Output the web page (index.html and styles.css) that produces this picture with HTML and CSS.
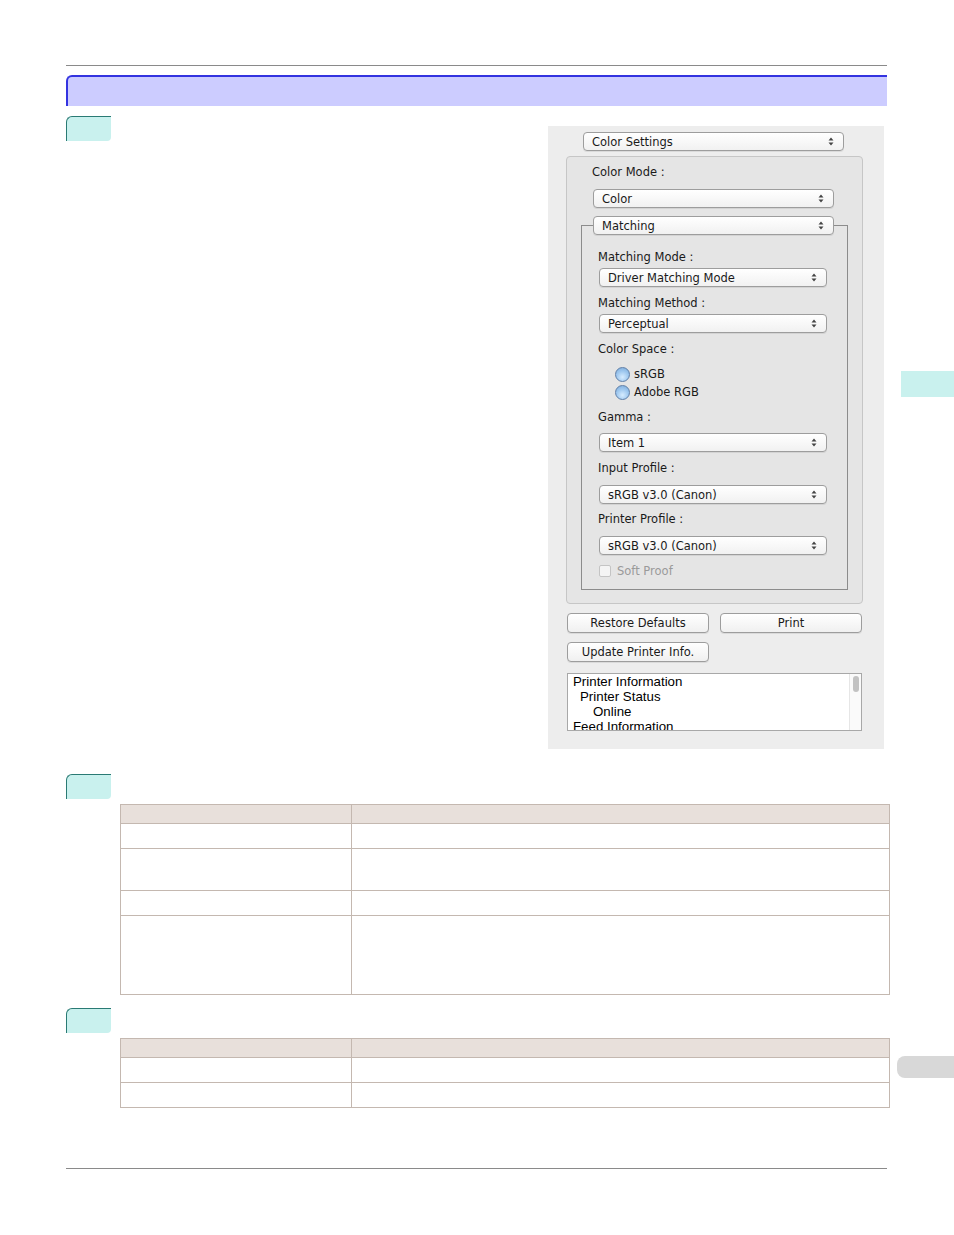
FILE: index.html
```html
<!DOCTYPE html>
<html>
<head>
    <title>Color Settings</title>
    <link rel="stylesheet" href="styles.css">
</head>
<body>
    <div class="page">
        <div class="rule rule-top"></div>
        <div class="title-bar"></div>

        <div class="section-one">
            <div class="step-tab"></div>
            <div class="dialog">
                <div class="popup popup-settings"><span>Color Settings</span><svg class="arrows" width="6" height="9" viewBox="0 0 6 9"><path d="M0.5 3.5 L3 0.5 L5.5 3.5Z M0.5 5.5 L3 8.5 L5.5 5.5Z"/></svg></div>

                <div class="group">
                    <div class="label label-mode">Color Mode :</div>
                    <div class="popup popup-mode"><span>Color</span><svg class="arrows" width="6" height="9" viewBox="0 0 6 9"><path d="M0.5 3.5 L3 0.5 L5.5 3.5Z M0.5 5.5 L3 8.5 L5.5 5.5Z"/></svg></div>

                    <div class="matching-box">
                        <div class="popup popup-matching"><span>Matching</span><svg class="arrows" width="6" height="9" viewBox="0 0 6 9"><path d="M0.5 3.5 L3 0.5 L5.5 3.5Z M0.5 5.5 L3 8.5 L5.5 5.5Z"/></svg></div>

                        <div class="label sub-label mt14">Matching Mode :</div>
                        <div class="popup popup-sub mt3"><span>Driver Matching Mode</span><svg class="arrows" width="6" height="9" viewBox="0 0 6 9"><path d="M0.5 3.5 L3 0.5 L5.5 3.5Z M0.5 5.5 L3 8.5 L5.5 5.5Z"/></svg></div>

                        <div class="label sub-label mt8">Matching Method :</div>
                        <div class="popup popup-sub mt3"><span>Perceptual</span><svg class="arrows" width="6" height="9" viewBox="0 0 6 9"><path d="M0.5 3.5 L3 0.5 L5.5 3.5Z M0.5 5.5 L3 8.5 L5.5 5.5Z"/></svg></div>

                        <div class="label sub-label mt8">Color Space :</div>
                        <div class="radio-row mt9"><span class="radio"></span>sRGB</div>
                        <div class="radio-row mt2"><span class="radio"></span>Adobe RGB</div>

                        <div class="label sub-label mt9">Gamma :</div>
                        <div class="popup popup-sub mt8"><span>Item 1</span><svg class="arrows" width="6" height="9" viewBox="0 0 6 9"><path d="M0.5 3.5 L3 0.5 L5.5 3.5Z M0.5 5.5 L3 8.5 L5.5 5.5Z"/></svg></div>

                        <div class="label sub-label mt8">Input Profile :</div>
                        <div class="popup popup-sub mt9"><span>sRGB v3.0 (Canon)</span><svg class="arrows" width="6" height="9" viewBox="0 0 6 9"><path d="M0.5 3.5 L3 0.5 L5.5 3.5Z M0.5 5.5 L3 8.5 L5.5 5.5Z"/></svg></div>

                        <div class="label sub-label mt7">Printer Profile :</div>
                        <div class="popup popup-sub mt9"><span>sRGB v3.0 (Canon)</span><svg class="arrows" width="6" height="9" viewBox="0 0 6 9"><path d="M0.5 3.5 L3 0.5 L5.5 3.5Z M0.5 5.5 L3 8.5 L5.5 5.5Z"/></svg></div>

                        <div class="check-row mt8"><span class="checkbox"></span>Soft Proof</div>
                    </div>
                </div>

                <div class="button-row">
                    <div class="button">Restore Defaults</div>
                    <div class="button">Print</div>
                </div>
                <div class="button-row">
                    <div class="button">Update Printer Info.</div>
                </div>

                <div class="info-list">
                    <div class="info-lines">
                        <div>Printer Information</div>
                        <div class="indent1">Printer Status</div>
                        <div class="indent2">Online</div>
                        <div>Feed Information</div>
                    </div>
                    <div class="scroll-track"><div class="scroll-thumb"></div></div>
                </div>
            </div>
        </div>

        <div class="step-tab tab-two"></div>
        <table class="info-table">
            <tr class="head"><td class="col1"></td><td></td></tr>
            <tr class="h25"><td></td><td></td></tr>
            <tr class="h42"><td></td><td></td></tr>
            <tr class="h25"><td></td><td></td></tr>
            <tr class="h79"><td></td><td></td></tr>
        </table>

        <div class="step-tab tab-three"></div>
        <table class="info-table">
            <tr class="head"><td class="col1"></td><td></td></tr>
            <tr class="h25"><td></td><td></td></tr>
            <tr class="h25"><td></td><td></td></tr>
        </table>

        <div class="rule rule-bottom"></div>
    </div>

    <div class="side-tab"></div>
    <div class="side-pill"></div>
</body>
</html>
```

FILE: styles.css
```css
body {
    margin: 0;
    background-color: #fff;
    font-family: "DejaVu Sans", sans-serif;
    position: relative;
    height: 1235px;
    overflow: hidden;
}

.page {
    margin-left: 66px;
    width: 821px;
}

.rule {
    height: 1px;
    background-color: #8a8a8a;
}

.rule-top {
    margin-top: 65px;
}

.rule-bottom {
    margin-top: 60px;
}

.title-bar {
    margin-top: 9px;
    height: 29px;
    background-color: #ccccff;
    border-top: 2px solid #3333e0;
    border-left: 2px solid #3333e0;
    border-top-left-radius: 6px;
}

/* step tabs */
.step-tab {
    width: 44px;
    height: 24px;
    background-color: #c9f1ee;
    border-top: 1px solid #2a7a74;
    border-left: 1px solid #2a7a74;
    border-top-left-radius: 6px;
    border-bottom-right-radius: 4px;
}

.section-one {
    display: flex;
    justify-content: space-between;
    align-items: flex-start;
    margin-top: 10px;
}

.tab-two {
    margin-top: 25px;
}

.tab-three {
    margin-top: 13px;
}

/* dialog screenshot */
.dialog {
    width: 336px;
    height: 623px;
    margin-top: 10px;
    margin-right: 3px;
    background-color: #ededed;
    font-size: 11.5px;
    color: #1a1a1a;
    overflow: hidden;
}

.popup {
    box-sizing: border-box;
    height: 19px;
    display: flex;
    align-items: center;
    justify-content: space-between;
    padding: 0 9px 0 8px;
    background: linear-gradient(#ffffff, #f1f1f1);
    border: 1px solid #9d9d9d;
    border-radius: 4px;
    box-shadow: 0 1px 0 rgba(0, 0, 0, 0.08);
}

.popup .arrows {
    fill: #444;
}

.popup-settings {
    margin: 6px 0 0 35px;
    width: 261px;
}

.group {
    box-sizing: border-box;
    margin: 5px 0 0 18px;
    width: 297px;
    height: 448px;
    border: 1px solid #c6c6c6;
    border-radius: 4px;
    background-color: #e5e5e5;
}

.label {
    height: 16px;
    line-height: 16px;
}

.label-mode {
    margin: 7px 0 0 25px;
}

.popup-mode {
    margin: 9px 0 0 26px;
    width: 241px;
}

.matching-box {
    box-sizing: border-box;
    margin: 17px 0 0 14px;
    width: 267px;
    height: 365px;
    border: 1px solid #8c8c8c;
}

.popup-matching {
    margin: -10px 0 0 11px;
    width: 241px;
}

.sub-label {
    margin-left: 16px;
}

.popup-sub {
    margin-left: 17px;
    width: 228px;
}

.radio-row,
.check-row {
    display: flex;
    align-items: center;
    height: 16px;
}

.radio-row {
    margin-left: 33px;
}

.radio {
    box-sizing: border-box;
    width: 15px;
    height: 15px;
    margin-right: 4px;
    border-radius: 50%;
    border: 1px solid #5f7fa8;
    background: radial-gradient(circle at 50% 70%, #d6ecff 0%, #9cc6ee 55%, #7aa9d8 100%);
}

.check-row {
    margin-left: 17px;
    color: #9a9a9a;
}

.checkbox {
    box-sizing: border-box;
    width: 12px;
    height: 12px;
    margin-right: 6px;
    border: 1px solid #c4c4c4;
    border-radius: 2px;
    background-color: #f4f4f4;
}

.mt2 { margin-top: 2px; }
.mt3 { margin-top: 3px; }
.mt7 { margin-top: 7px; }
.mt8 { margin-top: 8px; }
.mt9 { margin-top: 9px; }
.mt14 { margin-top: 14px; }

.button-row {
    display: flex;
    gap: 11px;
    margin: 9px 0 0 19px;
}

.button {
    box-sizing: border-box;
    width: 142px;
    height: 20px;
    line-height: 18px;
    text-align: center;
    background: linear-gradient(#ffffff, #f0f0f0);
    border: 1px solid #9d9d9d;
    border-radius: 4px;
    box-shadow: 0 1px 0 rgba(0, 0, 0, 0.08);
}

.info-list {
    box-sizing: border-box;
    display: flex;
    margin: 11px 0 0 19px;
    width: 295px;
    height: 58px;
    background-color: #fff;
    border: 1px solid #a8a8a8;
    overflow: hidden;
}

.info-lines {
    flex: 1;
    padding-left: 5px;
    font-family: "Liberation Sans", Arial, sans-serif;
    font-size: 13.3px;
    line-height: 15px;
    color: #000;
}

.indent1 {
    padding-left: 7px;
}

.indent2 {
    padding-left: 20px;
}

.scroll-track {
    width: 11px;
    border-left: 1px solid #e6e6e6;
    background-color: #fafafa;
}

.scroll-thumb {
    width: 6px;
    height: 16px;
    margin: 2px 0 0 3px;
    border-radius: 3px;
    background-color: #c2c2c2;
}

/* tables */
.info-table {
    border-collapse: collapse;
    margin: 5px 0 0 54px;
    width: 770px;
}

.info-table td {
    border: 1px solid #c4b8b0;
    padding: 0;
}

.info-table .col1 {
    width: 230px;
}

.info-table .head td {
    height: 18px;
    background-color: #e8e0db;
}

.h25 td { height: 24px; }
.h42 td { height: 41px; }
.h79 td { height: 78px; }

/* page-edge markers */
.side-tab {
    position: absolute;
    left: 901px;
    top: 371px;
    width: 53px;
    height: 26px;
    background-color: #c9f1ee;
}

.side-pill {
    position: absolute;
    left: 897px;
    top: 1056px;
    width: 57px;
    height: 22px;
    background-color: #d8d8d8;
    border-radius: 8px 0 0 8px;
}
```
